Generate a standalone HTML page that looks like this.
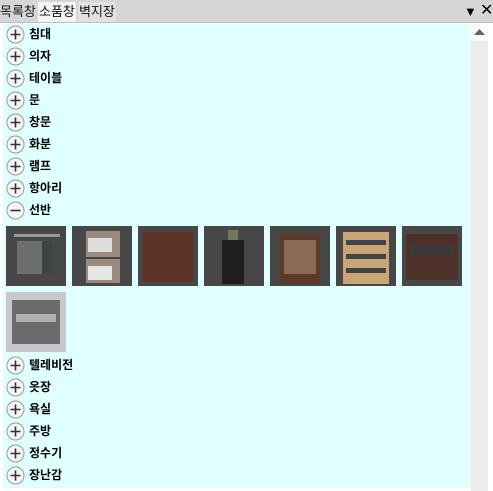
<!DOCTYPE html>
<html><head><meta charset="utf-8"><style>
body{margin:0;width:493px;height:491px;background:#fff;position:relative;overflow:hidden;font-family:"Liberation Sans","Noto Sans CJK KR",sans-serif;}
.bar{position:absolute;left:0;top:0;width:493px;height:22px;background:#d6d6d6;border-bottom:1px solid #c0c0c0;}
.tab{position:absolute;top:2px;height:20px;font-size:13px;line-height:20px;color:#111;white-space:nowrap;overflow:hidden;}
.content{position:absolute;left:3px;top:24px;width:468px;height:464px;background:#e0ffff;}
.sb{position:absolute;left:471px;top:24px;width:17px;height:467px;background:#ececec;}
.sbt{position:absolute;left:471px;top:24px;width:17px;height:17px;background:#fafafa;}
.row{position:absolute;left:6px;height:20px;font-size:12px;font-weight:bold;line-height:20px;color:#000;}
.row svg{position:absolute;left:0;top:1px;}
.row span{position:absolute;left:23px;white-space:nowrap;}
.th{position:absolute;width:60px;height:60px;background:#474747;}
</style></head><body>
<div class="bar"></div>
<div class="tab" style="left:0;background:#d6d6d6;width:37px">목록창</div>
<div class="tab" style="left:38px;background:#f4f4f4;width:38px;padding-left:1px;box-sizing:border-box">소품창</div>
<div class="tab" style="left:78px;background:#e2e2e2;width:38px;padding-left:1px;box-sizing:border-box">벽지장</div>
<div style="position:absolute;left:464px;top:3px;font-size:13px;line-height:18px">▼</div>
<div style="position:absolute;left:480px;top:2px;font-size:16px;line-height:18px">✕</div>
<div class="content"></div>
<div class="sb"></div><div class="sbt"></div>
<svg style="position:absolute;left:474px;top:29px" width="11" height="7"><polygon points="5.5,0 11,6 0,6" fill="#666"/></svg>

<div class="row" style="top:24px"><svg width="19" height="19"><circle cx="9.5" cy="9.5" r="8.5" fill="#f6f6f6" stroke="#999"/><path d="M4.5 9.5h10M9.5 4.5v10" stroke="#333" stroke-width="1.6"/></svg><span>침대</span></div>
<div class="row" style="top:46px"><svg width="19" height="19"><circle cx="9.5" cy="9.5" r="8.5" fill="#f6f6f6" stroke="#999"/><path d="M4.5 9.5h10M9.5 4.5v10" stroke="#333" stroke-width="1.6"/></svg><span>의자</span></div>
<div class="row" style="top:68px"><svg width="19" height="19"><circle cx="9.5" cy="9.5" r="8.5" fill="#f6f6f6" stroke="#999"/><path d="M4.5 9.5h10M9.5 4.5v10" stroke="#333" stroke-width="1.6"/></svg><span>테이블</span></div>
<div class="row" style="top:90px"><svg width="19" height="19"><circle cx="9.5" cy="9.5" r="8.5" fill="#f6f6f6" stroke="#999"/><path d="M4.5 9.5h10M9.5 4.5v10" stroke="#333" stroke-width="1.6"/></svg><span>문</span></div>
<div class="row" style="top:112px"><svg width="19" height="19"><circle cx="9.5" cy="9.5" r="8.5" fill="#f6f6f6" stroke="#999"/><path d="M4.5 9.5h10M9.5 4.5v10" stroke="#333" stroke-width="1.6"/></svg><span>창문</span></div>
<div class="row" style="top:134px"><svg width="19" height="19"><circle cx="9.5" cy="9.5" r="8.5" fill="#f6f6f6" stroke="#999"/><path d="M4.5 9.5h10M9.5 4.5v10" stroke="#333" stroke-width="1.6"/></svg><span>화분</span></div>
<div class="row" style="top:156px"><svg width="19" height="19"><circle cx="9.5" cy="9.5" r="8.5" fill="#f6f6f6" stroke="#999"/><path d="M4.5 9.5h10M9.5 4.5v10" stroke="#333" stroke-width="1.6"/></svg><span>램프</span></div>
<div class="row" style="top:178px"><svg width="19" height="19"><circle cx="9.5" cy="9.5" r="8.5" fill="#f6f6f6" stroke="#999"/><path d="M4.5 9.5h10M9.5 4.5v10" stroke="#333" stroke-width="1.6"/></svg><span>항아리</span></div>
<div class="row" style="top:200px"><svg width="19" height="19"><circle cx="9.5" cy="9.5" r="8.5" fill="#f6f6f6" stroke="#999"/><path d="M4.5 9.5h10" stroke="#333" stroke-width="1.6"/></svg><span>선반</span></div>

<div class="th" style="left:6px;top:226px"><div style="position:absolute;left:11px;top:15px;width:25px;height:33px;background:#6e6e70"></div><div style="position:absolute;left:36px;top:15px;width:10px;height:32px;background:#3e4346"></div><div style="position:absolute;left:8px;top:8px;width:46px;height:3px;background:#999"></div></div>
<div class="th" style="left:72px;top:226px"><div style="position:absolute;left:14px;top:5px;width:34px;height:26px;background:#9a8a80"></div><div style="position:absolute;left:16px;top:12px;width:24px;height:14px;background:#ddd"></div><div style="position:absolute;left:14px;top:33px;width:34px;height:24px;background:#9a8a80"></div><div style="position:absolute;left:16px;top:40px;width:24px;height:14px;background:#e6e6e6"></div></div>
<div class="th" style="left:138px;top:226px"><div style="position:absolute;left:5px;top:6px;width:50px;height:50px;background:#5a3424"></div></div>
<div class="th" style="left:204px;top:226px"><div style="position:absolute;left:18px;top:14px;width:22px;height:44px;background:#1e1e1e"></div><div style="position:absolute;left:24px;top:4px;width:10px;height:10px;background:#6b7a5a"></div></div>
<div class="th" style="left:270px;top:226px"><div style="position:absolute;left:10px;top:8px;width:40px;height:50px;background:#5c3a28"></div><div style="position:absolute;left:14px;top:14px;width:32px;height:34px;background:#8a6a54"></div></div>
<div class="th" style="left:336px;top:226px"><div style="position:absolute;left:7px;top:6px;width:46px;height:52px;background:#c9a678"></div><div style="position:absolute;left:10px;top:14px;width:40px;height:5px;background:#444"></div><div style="position:absolute;left:10px;top:28px;width:40px;height:5px;background:#444"></div><div style="position:absolute;left:10px;top:42px;width:40px;height:5px;background:#444"></div></div>
<div class="th" style="left:402px;top:226px"><div style="position:absolute;left:4px;top:8px;width:52px;height:46px;background:#4e3128"></div><div style="position:absolute;left:8px;top:20px;width:44px;height:8px;background:#3a3a40"></div></div>
<div class="th" style="left:6px;top:292px;background:#c8c8cc"><div style="position:absolute;left:6px;top:8px;width:48px;height:44px;background:#6a6a6c"></div><div style="position:absolute;left:10px;top:22px;width:40px;height:8px;background:#b0b0b0"></div></div>

<div class="row" style="top:355px"><svg width="19" height="19"><circle cx="9.5" cy="9.5" r="8.5" fill="#f6f6f6" stroke="#999"/><path d="M4.5 9.5h10M9.5 4.5v10" stroke="#333" stroke-width="1.6"/></svg><span>텔레비전</span></div>
<div class="row" style="top:377px"><svg width="19" height="19"><circle cx="9.5" cy="9.5" r="8.5" fill="#f6f6f6" stroke="#999"/><path d="M4.5 9.5h10M9.5 4.5v10" stroke="#333" stroke-width="1.6"/></svg><span>옷장</span></div>
<div class="row" style="top:399px"><svg width="19" height="19"><circle cx="9.5" cy="9.5" r="8.5" fill="#f6f6f6" stroke="#999"/><path d="M4.5 9.5h10M9.5 4.5v10" stroke="#333" stroke-width="1.6"/></svg><span>욕실</span></div>
<div class="row" style="top:421px"><svg width="19" height="19"><circle cx="9.5" cy="9.5" r="8.5" fill="#f6f6f6" stroke="#999"/><path d="M4.5 9.5h10M9.5 4.5v10" stroke="#333" stroke-width="1.6"/></svg><span>주방</span></div>
<div class="row" style="top:443px"><svg width="19" height="19"><circle cx="9.5" cy="9.5" r="8.5" fill="#f6f6f6" stroke="#999"/><path d="M4.5 9.5h10M9.5 4.5v10" stroke="#333" stroke-width="1.6"/></svg><span>정수기</span></div>
<div class="row" style="top:465px"><svg width="19" height="19"><circle cx="9.5" cy="9.5" r="8.5" fill="#f6f6f6" stroke="#999"/><path d="M4.5 9.5h10M9.5 4.5v10" stroke="#333" stroke-width="1.6"/></svg><span>장난감</span></div>
</body></html>
